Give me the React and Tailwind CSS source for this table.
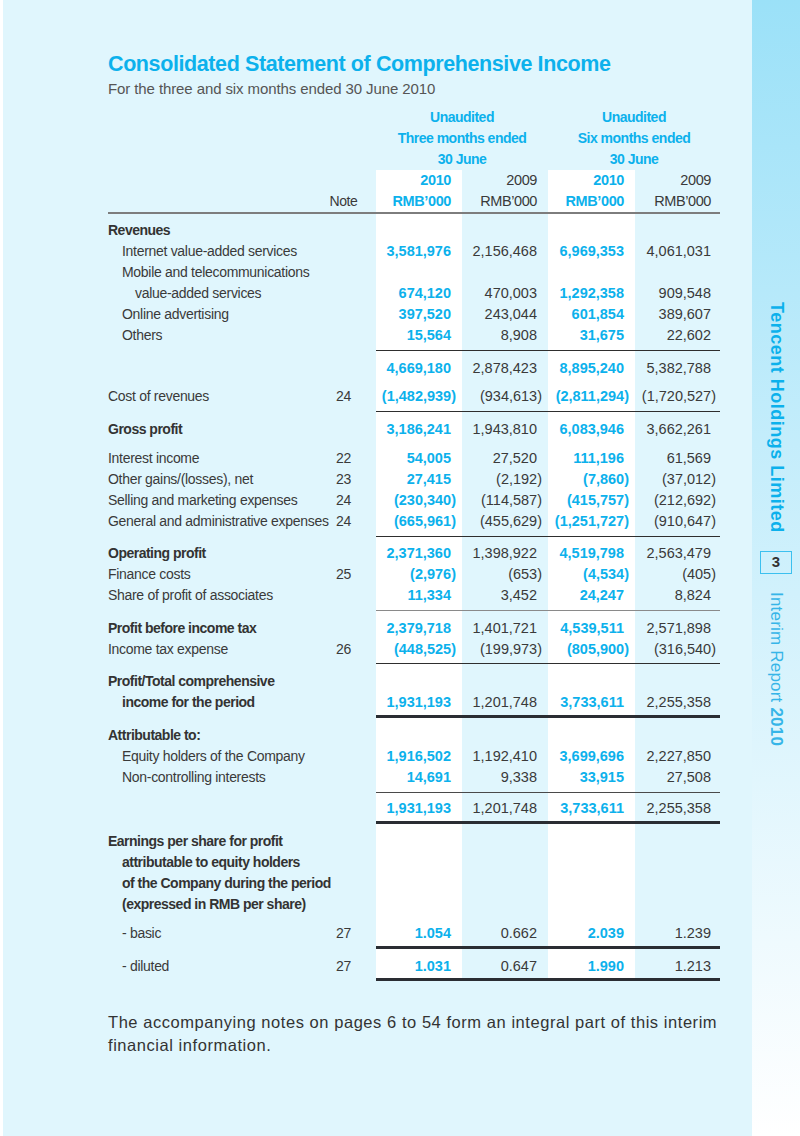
import React from "react";

const FONT = "font-['Liberation_Sans',Arial,sans-serif]";
const COLS = "grid grid-cols-[217px_37px_14px_86px_86px_87px_85px]";
const CYAN = "text-[#0cb1ec]";

const rows = [
	{ label: "Revenues", bold: true, pt: "pt-[6px]", line: "head" },
	{ label: "Internet value-added services", indent: 1, v: ["3,581,976", "2,156,468", "6,969,353", "4,061,031"] },
	{ label: "Mobile and telecommunications", indent: 1 },
	{ label: "value-added services", indent: 2, v: ["674,120", "470,003", "1,292,358", "909,548"] },
	{ label: "Online advertising", indent: 1, v: ["397,520", "243,044", "601,854", "389,607"] },
	{ label: "Others", indent: 1, v: ["15,564", "8,908", "31,675", "22,602"], pb: "pb-[4px]" },
	{ v: ["4,669,180", "2,878,423", "8,895,240", "5,382,788"], line: "thin", pt: "pt-[7px]", pb: "pb-[7px]" },
	{ label: "Cost of revenues", note: "24", v: ["(1,482,939)", "(934,613)", "(2,811,294)", "(1,720,527)"], pb: "pb-[4px]" },
	{ label: "Gross profit", bold: true, v: ["3,186,241", "1,943,810", "6,083,946", "3,662,261"], line: "thin", pt: "pt-[7px]", pb: "pb-[8px]" },
	{ label: "Interest income", note: "22", v: ["54,005", "27,520", "111,196", "61,569"] },
	{ label: "Other gains/(losses), net", note: "23", v: ["27,415", "(2,192)", "(7,860)", "(37,012)"] },
	{ label: "Selling and marketing expenses", note: "24", v: ["(230,340)", "(114,587)", "(415,757)", "(212,692)"] },
	{ label: "General and administrative expenses", note: "24", v: ["(665,961)", "(455,629)", "(1,251,727)", "(910,647)"], pb: "pb-[4px]" },
	{ label: "Operating profit", bold: true, v: ["2,371,360", "1,398,922", "4,519,798", "2,563,479"], line: "thin", pt: "pt-[6px]" },
	{ label: "Finance costs", note: "25", v: ["(2,976)", "(653)", "(4,534)", "(405)"] },
	{ label: "Share of profit of associates", v: ["11,334", "3,452", "24,247", "8,824"], pb: "pb-[4px]" },
	{ label: "Profit before income tax", bold: true, v: ["2,379,718", "1,401,721", "4,539,511", "2,571,898"], line: "gray", pt: "pt-[7px]" },
	{ label: "Income tax expense", note: "26", v: ["(448,525)", "(199,973)", "(805,900)", "(316,540)"], pb: "pb-[3px]" },
	{ label: "Profit/Total comprehensive", bold: true, line: "thin", pt: "pt-[7px]" },
	{ label: "income for the period", bold: true, indent: 1, v: ["1,931,193", "1,201,748", "3,733,611", "2,255,358"], pb: "pb-[2px]" },
	{ label: "Attributable to:", bold: true, line: "thick", pt: "pt-[7px]" },
	{ label: "Equity holders of the Company", indent: 1, v: ["1,916,502", "1,192,410", "3,699,696", "2,227,850"] },
	{ label: "Non-controlling interests", indent: 1, v: ["14,691", "9,338", "33,915", "27,508"], pb: "pb-[4px]" },
	{ v: ["1,931,193", "1,201,748", "3,733,611", "2,255,358"], line: "mid", pt: "pt-[5px]", pb: "pb-[2px]" },
	{ label: "Earnings per share for profit", bold: true, line: "thick", pt: "pt-[7px]" },
	{ label: "attributable to equity holders", bold: true, indent: 1 },
	{ label: "of the Company during the period", bold: true, indent: 1 },
	{ label: "(expressed in RMB per share)", bold: true, indent: 1 },
	{ label: "- basic", indent: 1, note: "27", v: ["1.054", "0.662", "2.039", "1.239"], pt: "pt-[8px]", pb: "pb-[2px]" },
	{ label: "- diluted", indent: 1, note: "27", v: ["1.031", "0.647", "1.990", "1.213"], line: "thick", pt: "pt-[7px]", pb: "pb-[1px]", last: true },
];

const LINES = {
	head: "border-t-2 border-[#7d7d7d]",
	thin: "border-t border-[#2e2e2e]",
	gray: "border-t border-[#8a8a8a]",
	mid: "border-t border-[#4a4a4a]",
	thick: "border-t-[3px] border-[#2a2d33]",
};

// same widths, no colour, so the label side stays level with the numbers
const GHOST = {
	head: "border-t-2 border-[#7d7d7d]",
	thin: "border-t border-transparent",
	gray: "border-t border-transparent",
	mid: "border-t border-transparent",
	thick: "border-t-[3px] border-transparent",
};

function Num({ value, blue }) {
	const neg = value.startsWith("(");
	return (
		<span className={`${neg ? "-mr-[5px]" : ""} ${blue ? `font-bold ${CYAN}` : "text-[#3a3a3a]"}`}>
			{value}
		</span>
	);
}

function Row({ label, note, v, bold, indent, pt = "", pb = "", line, last }) {
	const pad = `${pt} ${pb}`;
	const numLine = line ? LINES[line] : "";
	const leftLine = line ? GHOST[line] : "";
	const bottom = last ? "border-b-[3px] border-b-[#2a2d33]" : "";
	const ind = indent === 2 ? "pl-[27px]" : indent === 1 ? "pl-[14px]" : "";
	return (
		<div className={COLS}>
			<div
				className={`${pad} ${leftLine} ${ind} whitespace-nowrap text-[14px] ${
					bold ? "font-bold tracking-[-0.5px] text-[#333]" : "tracking-[-0.3px] text-[#3a3a3a]"
				}`}
			>
				{label}
			</div>
			<div className={`${pad} ${leftLine} text-center text-[14px] tracking-[-0.3px] text-[#3a3a3a]`}>{note}</div>
			<div className={`${pad} ${leftLine}`}></div>
			{[0, 1, 2, 3].map((i) => (
				<div
					key={i}
					className={`${pad} ${numLine} ${bottom} text-right text-[14.5px] ${i === 3 ? "pr-[9px]" : "pr-[11px]"} ${
						i % 2 === 0 ? "bg-white" : ""
					}`}
				>
					{v ? <Num value={v[i]} blue={i % 2 === 0} /> : "\u00a0"}
				</div>
			))}
		</div>
	);
}

function YearCell({ blue, last }) {
	return (
		<div
			className={`text-right text-[14.5px] tracking-[-0.4px] ${last ? "pr-[9px]" : "pr-[11px]"} ${
				blue ? `bg-white font-bold ${CYAN}` : "text-[#3a3a3a]"
			}`}
		>
			<div>{blue ? "2010" : "2009"}</div>
			<div>RMB&#8217;000</div>
		</div>
	);
}

function Header() {
	return (
		<div className="mt-[8px]">
			<div className={`${COLS} text-[14px] tracking-[-0.5px]`}>
				<div className={`col-start-4 col-span-2 text-center font-bold ${CYAN}`}>
					<div>Unaudited</div>
					<div>Three months ended</div>
					<div>30 June</div>
				</div>
				<div className={`col-start-6 col-span-2 text-center font-bold ${CYAN}`}>
					<div>Unaudited</div>
					<div>Six months ended</div>
					<div>30 June</div>
				</div>
			</div>
			<div className={COLS}>
				<div></div>
				<div className="flex items-end justify-center text-[14px] tracking-[-0.4px] text-[#3a3a3a]">Note</div>
				<div></div>
				<YearCell blue />
				<YearCell />
				<YearCell blue />
				<YearCell last />
			</div>
		</div>
	);
}

export default function App() {
	return (
		<div className={`flex min-h-[1136px] w-[800px] bg-white ${FONT}`}>
			<main className="ml-[3px] w-[749px] bg-[#e0f6fd] pl-[105px] pt-[50px] text-[14px] leading-[21px]">
				<h1 className={`text-[21.5px] leading-[28px] font-bold tracking-[-0.4px] ${CYAN}`}>
					Consolidated Statement of Comprehensive Income
				</h1>
				<p className="text-[15px] tracking-[-0.1px] text-[#555]">
					For the three and six months ended 30 June 2010
				</p>

				<Header />

				{rows.map((r, i) => (
					<Row key={i} {...r} />
				))}

				<div className="mt-[30px] whitespace-nowrap text-[16.5px] leading-[23px] tracking-[0.55px] text-[#333]">
					<div>The accompanying notes on pages 6 to 54 form an integral part of this interim</div>
					<div>financial information.</div>
				</div>
			</main>

			<aside className="flex w-[48px] flex-col items-center bg-linear-to-b from-[#9be1f8] to-[#ffffff] pt-[302px]">
				<div className={`[writing-mode:vertical-rl] text-[18px] font-bold tracking-[0.5px] ${CYAN}`}>
					Tencent Holdings Limited
				</div>
				<div className="mt-[18px] flex h-[23px] w-[32px] items-center justify-center border-[1.5px] border-[#3cc0ef] text-[15px] font-bold text-[#333]">
					3
				</div>
				<div className="mt-[18px] [writing-mode:vertical-rl] text-[17px] tracking-[0.2px] text-[#36b5e8]">
					Interim Report <span className="font-bold">2010</span>
				</div>
			</aside>
		</div>
	);
}
